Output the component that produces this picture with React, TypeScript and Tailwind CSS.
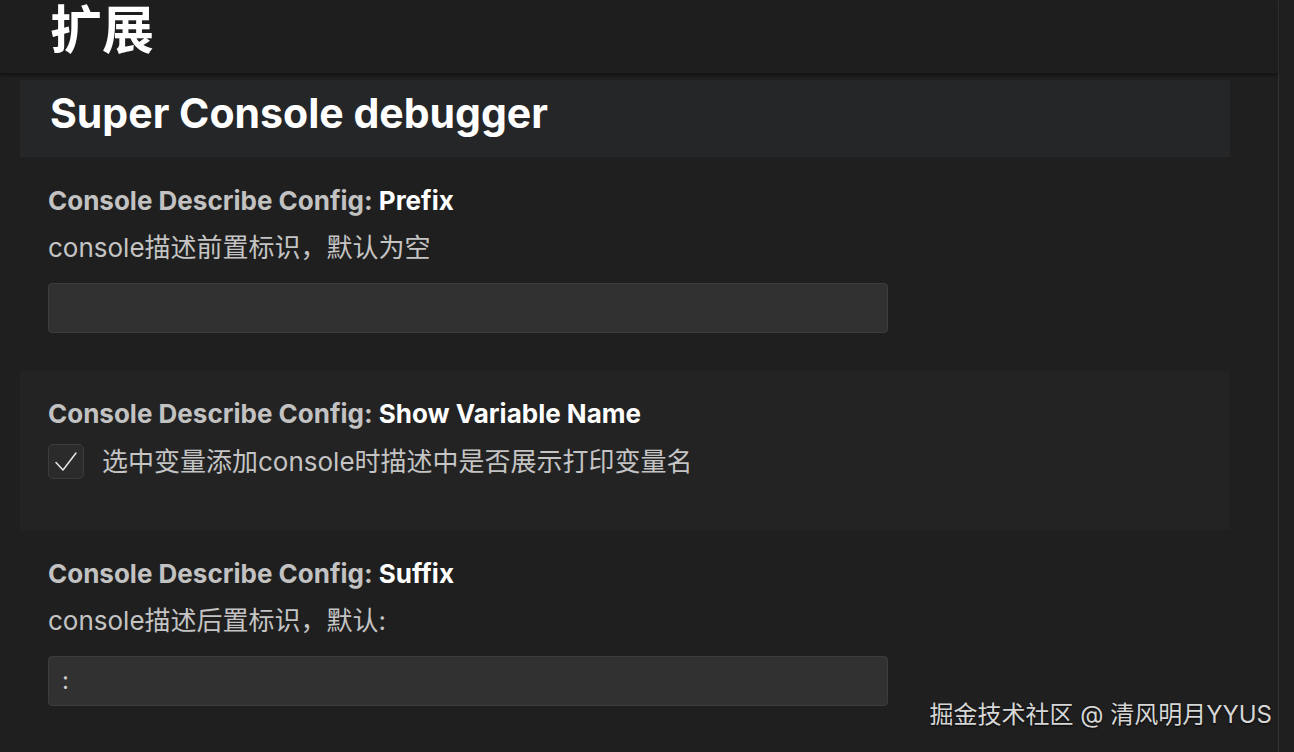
const font = { fontFamily: '"Inter", "Noto Sans CJK SC", sans-serif' };

function Label({ group, name }: { group: string; name: string }) {
  return (
    <div className="h-[28px] flex items-center text-[26px] font-bold leading-none">
      <span className="text-[#c2c2c2]">{group}:&nbsp;</span>
      <span className="text-white">{name}</span>
    </div>
  );
}

function TextSetting({ name, desc, value }: { name: string; desc: string; value: string }) {
  return (
    <div className="pl-[28px] pt-[30px] pb-[38px]">
      <Label group="Console Describe Config" name={name} />
      <div className="mt-[19px] h-[28px] flex items-center text-[26px] leading-none text-[#c4c4c4]">{desc}</div>
      <div className="mt-[21px] w-[840px] h-[50px] rounded-[4px] bg-[#313131] border border-[#3d3d3d] flex items-center px-[13px] text-[24px] text-[#cccccc]">
        {value}
      </div>
    </div>
  );
}

export default function App() {
  return (
    <div className="w-[1294px] h-[752px] bg-[#1f1f1f] flex overflow-hidden relative" style={font}>
      <div className="w-[1279px] flex flex-col border-r border-[#353535]">
        {/* Header */}
        <div className="h-[74px] shrink-0 px-[50px] pb-[12px] flex items-center bg-[#1e1e1e] border-b border-[#141414] shadow-[0_2px_3px_rgba(0,0,0,0.35)]">
          <h1 className="text-[52px] font-bold text-white leading-none">扩展</h1>
        </div>

        <div className="pl-[20px] pr-[48px] pt-[6px]">
          {/* Section header */}
          <div className="h-[77px] bg-[#252628] pl-[30px] pb-[10px] flex items-center">
            <h2 className="text-[41px] font-bold text-white leading-none">Super Console debugger</h2>
          </div>

          <TextSetting name="Prefix" desc="console描述前置标识，默认为空" value="" />

          {/* Focused checkbox setting */}
          <div className="bg-[#232323] pl-[28px] pt-[29px] pb-[51px]">
            <Label group="Console Describe Config" name="Show Variable Name" />
            <div className="mt-[16px] flex items-center gap-[18px]">
              <div className="w-[36px] h-[35px] rounded-[5px] bg-[#2b2b2b] border border-[#3c3c3c] flex items-center justify-center">
                <svg width="26" height="26" viewBox="0 0 26 26" fill="none">
                  <path d="M3 13.5 L10 21 L23 4" stroke="#e6e6e6" strokeWidth="1.5" strokeLinecap="round" strokeLinejoin="round" />
                </svg>
              </div>
              <span className="text-[26px] leading-none text-[#c4c4c4]">选中变量添加console时描述中是否展示打印变量名</span>
            </div>
          </div>

          <TextSetting name="Suffix" desc="console描述后置标识，默认:" value=":" />
        </div>
      </div>

      {/* Watermark */}
      <div className="absolute right-[22px] bottom-[19px] text-[24px] text-[#d6d6d6] [text-shadow:0_1px_2px_rgba(0,0,0,0.8)]">
        掘金技术社区 @ 清风明月YYUS
      </div>
    </div>
  );
}
